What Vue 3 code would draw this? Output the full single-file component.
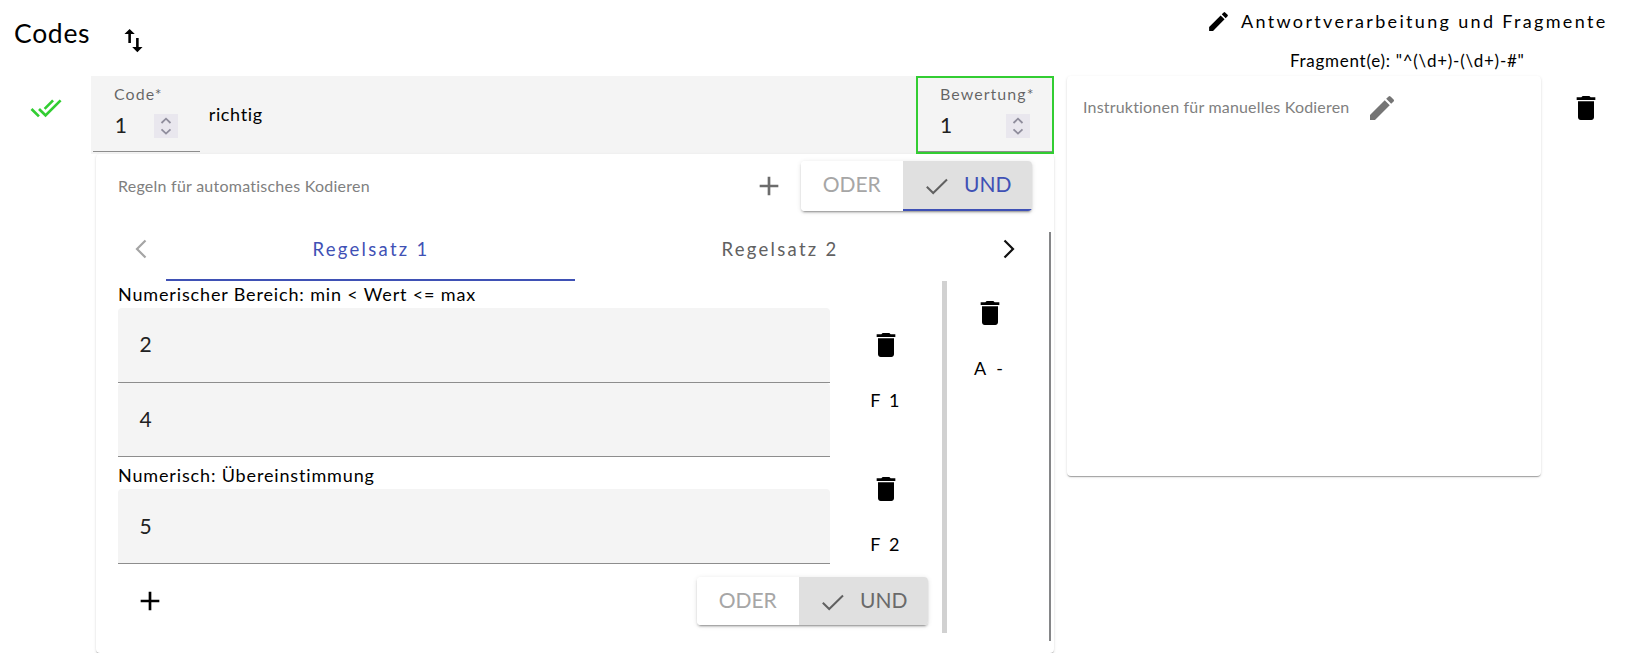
<script setup>
import { h } from 'vue'

const paths = {
  swap: 'M16 17.01V10h-2v7.01h-3L15 21l4-3.99h-3zM9 3L5 6.99h3V14h2V6.99h3L9 3z',
  trash: 'M6 19c0 1.1.9 2 2 2h8c1.1 0 2-.9 2-2V7H6v12zM19 4h-3.5l-1-1h-5l-1 1H5v2h14V4z',
  edit: 'M3 17.25V21h3.75L17.81 9.94l-3.75-3.75L3 17.25zM20.71 7.04a.996.996 0 0 0 0-1.41l-2.34-2.34a.996.996 0 0 0-1.41 0l-1.83 1.83 3.75 3.75 1.83-1.83z',
  done: 'M18 7l-1.41-1.41-6.34 6.34 1.41 1.41L18 7zm4.24-1.41L11.66 16.17 7.48 12l-1.41 1.41L11.66 19l12-12-1.42-1.41zM.41 13.41L6 19l1.41-1.41L1.83 12 .41 13.41z',
  add: 'M19 13h-6v6h-2v-6H5v-2h6V5h2v6h6v2z',
}

const Icon = (props) =>
  h('svg', { viewBox: '0 0 24 24', width: props.size || 32, height: props.size || 32, fill: 'currentColor' }, [
    h('path', { d: paths[props.name] }),
  ])
Icon.props = ['name', 'size']

const rules = [
  { title: 'Numerischer Bereich: min < Wert <= max', values: ['2', '4'], fragment: 'F 1', cls: 'range' },
  { title: 'Numerisch: Übereinstimmung', values: ['5'], fragment: 'F 2', cls: 'match' },
]
</script>

<template>
  <div class="page">
    <header class="head">
      <div class="head-left">
        <h1>Codes</h1>
        <Icon name="swap" class="swap" size="31" />
      </div>
      <div class="head-right">
        <div class="process"><Icon name="edit" size="25" /><span>Antwortverarbeitung und Fragmente</span></div>
        <div class="fragments">Fragment(e): "^(\d+)-(\d+)-#"</div>
      </div>
    </header>

    <main class="row">
      <div class="status"><Icon name="done" /></div>

      <section class="coding">
        <div class="code-bar">
          <div class="field code">
            <label>Code*</label>
            <div class="number">
              <span>1</span>
              <svg class="spin" viewBox="0 0 24 24"><path d="M7.500 9 12 4.700 16.500 9M7.500 15.300 12 19.600 16.500 15.300" /></svg>
            </div>
          </div>
          <div class="code-name">richtig</div>
          <div class="field score">
            <label>Bewertung*</label>
            <div class="number">
              <span>1</span>
              <svg class="spin" viewBox="0 0 24 24"><path d="M7.500 9 12 4.700 16.500 9M7.500 15.300 12 19.600 16.500 15.300" /></svg>
            </div>
          </div>
        </div>

        <div class="card rules-card">
          <div class="toolbar">
            <span class="hint">Regeln für automatisches Kodieren</span>
            <Icon name="add" class="add-set" />
            <div class="toggle active">
              <div class="opt"><span>ODER</span></div>
              <div class="opt on">
                <svg class="check" viewBox="0 0 24 18"><path d="M1.800 8.700 8.200 15 22 1.500" /></svg>
                <span>UND</span>
              </div>
            </div>
          </div>

          <div class="scroll">
            <nav class="tabs">
              <div class="pager off"><svg viewBox="0 0 12 20"><path d="M10.500 1.500 2 10l8.500 8.500" /></svg></div>
              <div class="tab current">Regelsatz 1</div>
              <div class="tab">Regelsatz 2</div>
              <div class="pager next"><svg viewBox="0 0 12 20"><path d="M1.500 1.500 10 10l-8.500 8.500" /></svg></div>
            </nav>
            <div class="set">
              <div class="rules">
                <div v-for="rule in rules" :key="rule.title" class="rule" :class="rule.cls">
                  <div class="rule-main">
                    <div class="rule-title">{{ rule.title }}</div>
                    <div v-for="v in rule.values" :key="v" class="input">{{ v }}</div>
                  </div>
                  <div class="actions">
                    <Icon name="trash" />
                    <span class="tag">{{ rule.fragment }}</span>
                  </div>
                </div>
                <div class="rules-foot">
                  <Icon name="add" class="add-rule" />
                  <div class="toggle">
                    <div class="opt"><span>ODER</span></div>
                    <div class="opt on">
                      <svg class="check" viewBox="0 0 24 18"><path d="M1.800 8.700 8.200 15 22 1.500" /></svg>
                      <span>UND</span>
                    </div>
                  </div>
                </div>
              </div>
              <div class="actions set-actions">
                <Icon name="trash" />
                <span class="tag">A -</span>
              </div>
            </div>
          </div>
        </div>
      </section>

      <aside class="card manual">
        <span class="hint">Instruktionen für manuelles Kodieren</span>
        <Icon name="edit" />
      </aside>
      <div class="remove"><Icon name="trash" /></div>
    </main>
  </div>
</template>

<style>
body { background: #fff; }
</style>

<style scoped>
.page { width: 1626px; height: 653px; overflow: hidden; font-family: Lato, "Noto Sans", sans-serif; font-variant-ligatures: none; color: #000; font-size: 18px; line-height: 27px; white-space: nowrap; }
.page * { box-sizing: border-box; }
svg { display: block; flex: none; }
.head { height: 76px; display: flex; justify-content: space-between; }
.head-left { display: flex; padding-left: 14px; }
h1 { margin: 15px 0 0; font-size: 26.5px; line-height: 36px; font-weight: 400; width: 103.5px; letter-spacing: .7px; }
.swap { margin-top: 24.5px; }
.head-right { width: 420px; }
.process { display: flex; height: 46px; padding-top: 8px; }
.process svg { margin: 1px 10px 0 0; }
.process span { letter-spacing: 2.33px; }
.fragments { padding-left: 84px; font-size: 17px; line-height: 30px; letter-spacing: .72px; }
.row { display: flex; align-items: flex-start; }
.status { width: 91px; padding: 16px 0 0 30px; color: #32cd32; }
.coding { width: 963px; }
.code-bar { height: 78px; background: #f4f4f4; display: flex; }
.field { display: flex; flex-direction: column; }
.field label { font-size: 16px; line-height: 20px; letter-spacing: 1.05px; color: rgba(0,0,0,.6); }
.number { display: flex; justify-content: space-between; font-size: 21px; line-height: 22px; color: #212121; }
.spin { width: 24px; height: 24px; background: #e9e7ee; }
.spin path { fill: none; stroke: #8f8d9c; stroke-width: 1.8; }
.code { width: 107px; height: 76px; margin-left: 2px; padding: 8px 22px 0 21px; border-bottom: 1px solid #8d8d8d; }
.code .number, .score .number { margin-top: 10px; }
.code .number span { padding-left: .7px; }
.code-name { padding: 25px 0 0 8.7px; flex: 1; letter-spacing: .65px; }
.score { width: 138px; height: 78px; border: 2px solid #32cd32; padding: 6px 22px 0 22px; box-shadow: inset 0 -1px #8d8d8d; }
.card { background: #fff; border-radius: 4px; box-shadow: 0 2px 1px -1px rgba(0,0,0,.2), 0 1px 1px 0 rgba(0,0,0,.14), 0 1px 3px 0 rgba(0,0,0,.12); }
.rules-card { margin-left: 5px; width: 958px; height: 499px; padding-left: 22px; }
.toolbar { height: 78px; display: flex; padding-top: 7px; }
.hint { flex: none; font-size: 16px; line-height: 24px; color: #808080; letter-spacing: .24px; }
.toolbar .hint { margin-top: 13px; width: 635px; }
.add-set { margin: 9px 16px 0 0; color: #6c6c6c; }
.toggle { display: flex; width: 231px; height: 48px; border-radius: 4px; overflow: hidden; font-size: 21px; box-shadow: 0 3px 1px -2px rgba(0,0,0,.2), 0 2px 2px 0 rgba(0,0,0,.14), 0 1px 5px 0 rgba(0,0,0,.12); }
.toggle.active { height: 50px; }
.opt { width: 102px; padding: 9px 0 0 21.7px; background: #fff; color: #a6a6a6; line-height: 28px; }
.opt.on { width: 129px; display: flex; background: #e0e0e0; color: #6a6a6a; }
.active .on { border-bottom: 2px solid #3f51b5; }
.active .on span { color: #3f51b5; }
.check { width: 24px; height: 18px; margin: 8px 15.3px 0 0; }
.check path { fill: none; stroke: #616161; stroke-width: 2; }
.scroll { width: 933px; height: 409px; border-right: 2px solid #858688; }
.tabs { display: flex; height: 49px; }
.pager { width: 48px; display: flex; padding: 7px 0 0 16.500px; }
.pager.next { padding-left: 19px; }
.pager svg { width: 12px; height: 20px; }
.pager path { fill: none; stroke: #111; stroke-width: 2.2; }
.off path { stroke: #a5a5a5; }
.tab { width: 409px; text-align: center; padding: 4px 0 0 1px; color: #616161; font-size: 18.5px; letter-spacing: 2.3px; }
.current { color: #3f51b5; border-bottom: 2px solid #3f51b5; }
.set { display: flex; }
.rules { width: 829px; height: 352px; border-right: 5px solid #d1d1d1; }
.rule { display: flex; }
.rule-main { width: 712px; }
.rule-title { letter-spacing: .85px; }
.match .rule-title { padding-top: 5px; }
.input { height: 75px; background: #f4f4f4; border-bottom: 1px solid #8d8d8d; border-radius: 4px 4px 0 0; padding-left: 21.5px; font-size: 21px; line-height: 71px; color: #212121; }
.match .input { line-height: 73px; }
.input + .input { height: 74px; }
.actions { width: 112px; display: flex; flex-direction: column; align-items: center; padding-top: 48px; }
.match .actions { padding-top: 16px; }
.tag { margin-top: 26px; letter-spacing: 2.2px; }
.set-actions { width: 85px; padding-top: 16px; }
.set-actions .tag { letter-spacing: 3px; padding-left: 1px; }
.rules-foot { display: flex; justify-content: space-between; padding: 13px 14px 0 16px; }
.add-rule { margin-top: 8px; }
.manual { width: 474px; height: 400px; margin-left: 13px; padding: 16px 0 0 16px; display: flex; color: #757575; }
.manual .hint { margin-top: 3px; width: 282.5px; letter-spacing: .19px; }
.remove { padding: 16px 0 0 29px; }
</style>
